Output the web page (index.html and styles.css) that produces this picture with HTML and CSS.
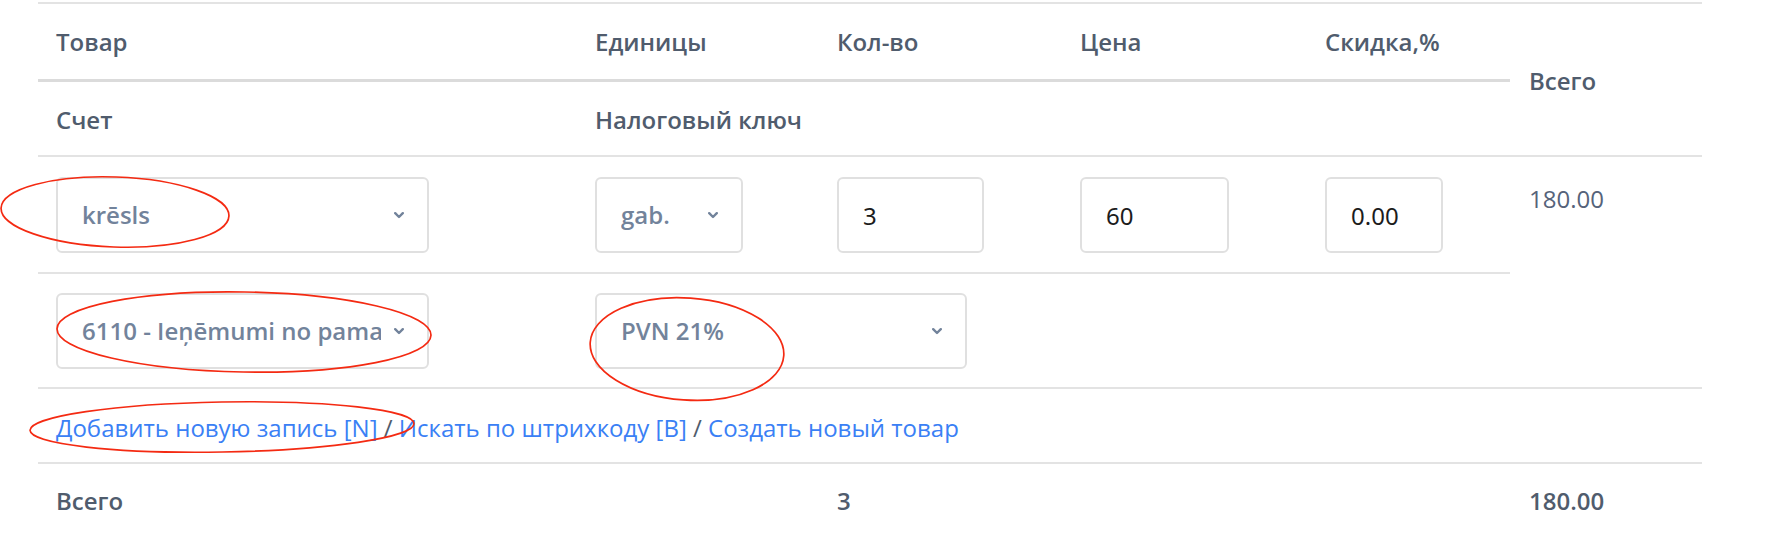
FILE: index.html
```
<!DOCTYPE html>
<html lang="ru">
<head>
<meta charset="utf-8">
<title>Товары</title>
<link rel="stylesheet" href="styles.css">
</head>
<body>
<div class="page">
  <table class="items">
    <colgroup>
      <col class="c-prod"><col class="c-unit"><col class="c-qty"><col class="c-price"><col class="c-disc"><col class="c-total">
    </colgroup>
    <thead>
      <tr class="h1">
        <th>Товар</th>
        <th>Единицы</th>
        <th>Кол-во</th>
        <th>Цена</th>
        <th>Скидка,%</th>
        <th rowspan="2" class="th-total">Всего</th>
      </tr>
      <tr class="h2">
        <th>Счет</th>
        <th colspan="4">Налоговый ключ</th>
      </tr>
    </thead>
    <tbody>
      <tr class="r1">
        <td>
          <div class="select w-prod"><span class="sel-text">krēsls</span><svg class="chev" viewBox="0 0 10 7"><polyline points="1.2,1.2 5,5 8.8,1.2"/></svg></div>
        </td>
        <td>
          <div class="select w-unit"><span class="sel-text">gab.</span><svg class="chev" viewBox="0 0 10 7"><polyline points="1.2,1.2 5,5 8.8,1.2"/></svg></div>
        </td>
        <td><input class="field w-qty" type="text" value="3"></td>
        <td><input class="field w-price" type="text" value="60"></td>
        <td><input class="field w-disc" type="text" value="0.00"></td>
        <td rowspan="2" class="sum">180.00</td>
      </tr>
      <tr class="r2">
        <td>
          <div class="select w-prod sel-long"><span class="sel-text">6110 - Ieņēmumi no pamatdarbības</span><svg class="chev" viewBox="0 0 10 7"><polyline points="1.2,1.2 5,5 8.8,1.2"/></svg></div>
        </td>
        <td colspan="4">
          <div class="select w-tax"><span class="sel-text">PVN 21%</span><svg class="chev" viewBox="0 0 10 7"><polyline points="1.2,1.2 5,5 8.8,1.2"/></svg></div>
        </td>
      </tr>
      <tr class="links">
        <td colspan="6"><a class="link" href="#">Добавить новую запись [N]</a> <span class="sep">/</span> <a class="link" href="#">Искать по штрихкоду [B]</a> <span class="sep">/</span> <a class="link" href="#">Создать новый товар</a></td>
      </tr>
      <tr class="total">
        <td>Всего</td>
        <td></td>
        <td>3</td>
        <td></td>
        <td></td>
        <td>180.00</td>
      </tr>
    </tbody>
  </table>

  <svg class="marks" width="1786" height="548" viewBox="0 0 1786 548">
    <ellipse cx="115" cy="212" rx="114" ry="35" transform="rotate(2 115 212)"/>
    <ellipse cx="244" cy="332" rx="187" ry="40" transform="rotate(1 244 332)"/>
    <ellipse cx="687" cy="349" rx="97" ry="51" transform="rotate(4 687 349)"/>
    <ellipse cx="222" cy="427" rx="192" ry="25" transform="rotate(-1 222 427)"/>
  </svg>
</div>
</body>
</html>
```
FILE: styles.css
```
* { box-sizing: border-box; }

html, body {
  margin: 0;
  background: #ffffff;
}

body {
  font-family: "Open Sans", "Noto Sans", sans-serif;
  font-size: 24px;
  line-height: 36px;
  color: #505c6d;
}

.page {
  position: relative;
  width: 1786px;
  height: 548px;
  padding: 2px 0 0 38px;
  overflow: hidden;
}

.items {
  width: 1664px;
  border-collapse: separate;
  border-spacing: 0;
  table-layout: fixed;
}

.c-prod { width: 539px; }
.c-unit { width: 242px; }
.c-qty { width: 243px; }
.c-price { width: 245px; }
.c-disc { width: 203px; }
.c-total { width: 192px; }

.items th,
.items td {
  padding: 0 18px;
  text-align: left;
  vertical-align: middle;
  white-space: nowrap;
}

.items th {
  font-weight: 600;
  color: #505c6d;
}

.h1 th {
  border-top: 2px solid #e3e3e3;
  border-bottom: 3px solid #dbdbdb;
  padding-top: 20px;
  padding-bottom: 19px;
}

.h1 th.th-total {
  border-bottom: 2px solid #e3e3e3;
  padding-top: 3px;
  padding-bottom: 0;
  padding-left: 19px;
}

.h2 th {
  border-bottom: 2px solid #e3e3e3;
  padding-top: 20px;
  padding-bottom: 17px;
}

.r1 td {
  border-bottom: 2px solid #e3e3e3;
  padding-top: 20px;
  padding-bottom: 19px;
}

.r1 td.sum {
  vertical-align: top;
  padding-top: 24px;
  padding-left: 19px;
  font-weight: 400;
  color: #56637a;
}

.r2 td {
  border-bottom: 2px solid #e3e3e3;
  padding-top: 19px;
  padding-bottom: 18px;
}

.links td {
  border-bottom: 2px solid #e3e3e3;
  padding-top: 21px;
  padding-bottom: 16px;
  color: #505c6d;
}

.link {
  color: #3a80f5;
  text-decoration: none;
}

.sep {
  color: #505c6d;
}

.total td {
  padding-top: 19px;
  padding-bottom: 10px;
  font-weight: 600;
  color: #505c6d;
}

.total td:last-child {
  padding-left: 19px;
}

.select {
  display: flex;
  align-items: center;
  gap: 6px;
  height: 76px;
  border: 2px solid #e0e0e0;
  border-radius: 6px;
  padding: 0 23px 0 24px;
  background: #ffffff;
  color: #72839b;
  font-weight: 600;
}

.sel-long {
  gap: 13px;
}

.sel-text {
  flex: 1;
  min-width: 0;
  overflow: hidden;
  white-space: nowrap;
  text-overflow: clip;
}

.chev {
  flex: none;
  width: 10px;
  height: 7px;
  fill: none;
  stroke: #72839b;
  stroke-width: 2.4;
  stroke-linecap: round;
  stroke-linejoin: round;
}

.w-prod { width: 373px; }
.w-unit { width: 148px; }
.w-tax { width: 372px; }

.field {
  display: block;
  height: 76px;
  border: 2px solid #e0e0e0;
  border-radius: 6px;
  padding: 0 20px 0 24px;
  margin: 0;
  background: #ffffff;
  font-family: "Noto Sans", "Open Sans", sans-serif;
  font-size: 24px;
  color: #1c1c1c;
  outline: none;
}

.w-qty { width: 147px; }
.w-price { width: 149px; }
.w-disc { width: 118px; }

.marks {
  position: absolute;
  left: 0;
  top: 0;
  pointer-events: none;
}

.marks ellipse {
  fill: none;
  stroke: #f42a12;
  stroke-width: 1.7;
}
```
